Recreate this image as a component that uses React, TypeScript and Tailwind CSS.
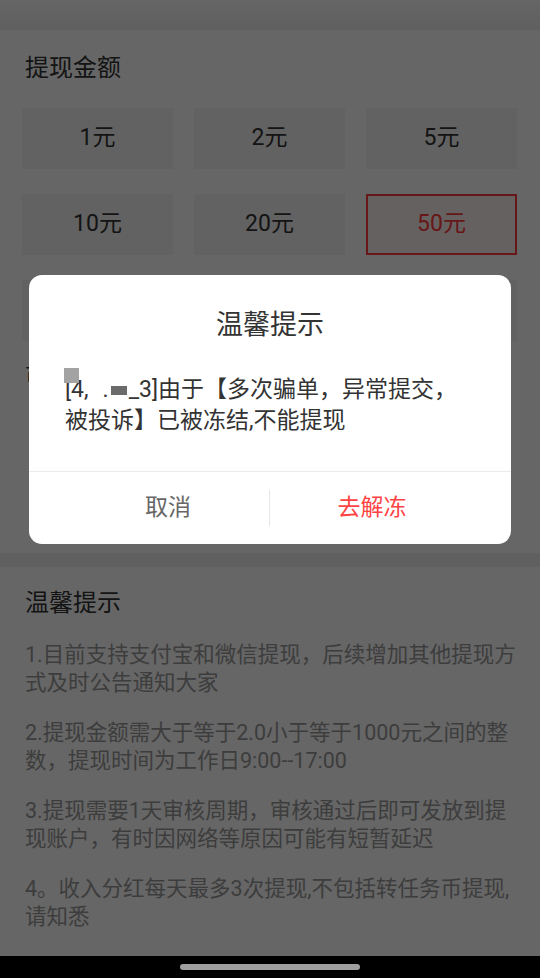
import React from 'react';

const amounts = ['1元', '2元', '5元', '10元', '20元', '50元', '100元', '200元', '500元'];

const tips = [
  '1.目前支持支付宝和微信提现，后续增加其他提现方式及时公告通知大家',
  '2.提现金额需大于等于2.0小于等于1000元之间的整数，提现时间为工作日9:00--17:00',
  '3.提现需要1天审核周期，审核通过后即可发放到提现账户，有时因网络等原因可能有短暂延迟',
  '4。收入分红每天最多3次提现,不包括转任务币提现,请知悉',
];

const FONT = "font-['Roboto','Noto_Sans_CJK_SC',sans-serif]";

const App: React.FC = () => {
  const selected = '50元';

  return (
    <div className={`relative flex h-[978px] w-[540px] flex-col overflow-hidden bg-white ${FONT}`}>
      <div className="relative flex flex-1 flex-col">
        {/* top strip */}
        <div className="h-[30px] bg-gradient-to-b from-[#ffffff] to-[#efefef]" />

        {/* amount section */}
        <div className="bg-white pt-[24px] pb-[163px]">
          <h2 className="px-[25px] text-[24px] leading-[28px] text-[#333]">提现金额</h2>
          <div className="mt-[26px] grid grid-cols-3 gap-x-[21px] gap-y-[25px] pl-[22px] pr-[23px]">
            {amounts.map((a) => (
              <div
                key={a}
                className={
                  a === selected
                    ? 'flex h-[61px] items-center justify-center border-2 border-[#ff3a3a] bg-[#fff2f2] text-[23px] text-[#ff3a3a]'
                    : 'flex h-[61px] items-center justify-center bg-[#f4f4f4] text-[23px] text-[#333]'
                }
              >
                {a}
              </div>
            ))}
          </div>
          <p className="mt-[21px] px-[25px] text-[21px] leading-[28px] text-[#333]">可提现余额：0.00元</p>
        </div>

        <div className="h-[14px] bg-[#efefef]" />

        {/* tips section */}
        <div className="flex-1 bg-white pl-[25px] pr-[20px] pt-[22px]">
          <h2 className="text-[24px] leading-[28px] text-[#333]">温馨提示</h2>
          <div className="mt-[24px]">
            {tips.map((t) => (
              <p key={t} className="mb-[23px] text-[21.5px] leading-[27.5px] text-[#999]">
                {t}
              </p>
            ))}
          </div>
        </div>

        {/* dim overlay + dialog */}
        <div className="absolute inset-0 bg-black/60 px-[29px] pt-[275px]">
          <div className="overflow-hidden rounded-[13px] bg-white">
            <div className="pt-[32px] text-center text-[27px] leading-[36px] text-[#333]">温馨提示</div>
            <div className="relative pt-[31px] pb-[35px] pl-[36px] pr-[20px] text-[23px] leading-[31px] text-[#333]">
              <span className="absolute left-[35px] top-[25px] h-[15px] w-[15px] bg-[#a3a3a3]" />
              [4,
              <span className="inline-block w-[14px]" />.
              <span className="mx-[2px] inline-block h-[9px] w-[16px] bg-[#6b6b6b] align-middle" />
              _3]由于【多次骗单，异常提交，
              <br />
              被投诉】已被冻结,不能提现
            </div>
            <div className="flex h-[73px] items-center border-t border-[#ebebeb]">
              <div className="flex w-[240px] shrink-0 justify-center pl-[38px] text-[23px] text-[#666]">取消</div>
              <div className="h-[36px] w-px shrink-0 bg-[#e6e6e6]" />
              <div className="flex w-[241px] shrink-0 justify-center pr-[37px] text-[23px] text-[#ff4343]">去解冻</div>
            </div>
          </div>
        </div>
      </div>

      {/* system navigation bar */}
      <div className="flex h-[22px] items-center justify-center bg-black">
        <div className="h-[6px] w-[180px] rounded-full bg-[#9e9e9e]" />
      </div>
    </div>
  );
};

export default App;
